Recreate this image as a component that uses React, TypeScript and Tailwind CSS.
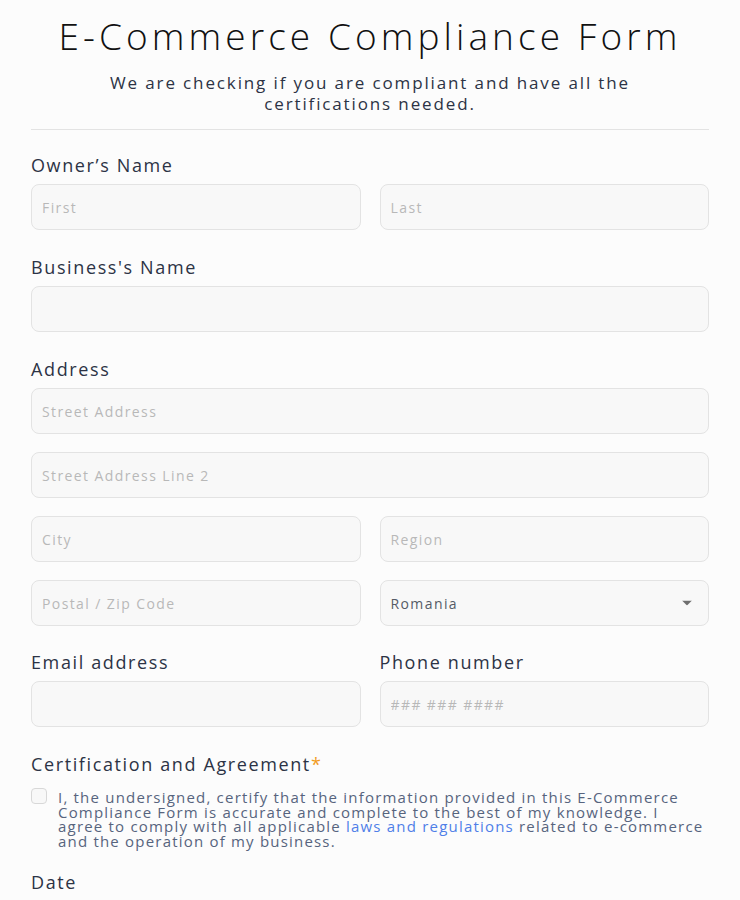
import React from 'react';

const font = { fontFamily: '"Open Sans", "DejaVu Sans", sans-serif' };

const fieldCls =
  'h-[46px] px-[10px] bg-[#f8f8f8] border border-[#e3e3e3] rounded-[8px] text-[14px] tracking-[0.1em] text-[#2c3345] placeholder:text-[#b8b8b8] outline-none';
const inputCls = 'w-full ' + fieldCls;

function Label({ children }: { children: React.ReactNode }) {
  return (
    <label className="block h-[22px] leading-[22px] text-[18px] font-medium tracking-[0.09em] text-[#2c3345] mb-[8px]">
      {children}
    </label>
  );
}

export default function App() {
  return (
    <div className="min-h-screen bg-[#fcfcfc]" style={font}>
      <div className="px-[31px] pt-[14px]">
        <h1 className="text-center text-[37px] font-light leading-[44px] tracking-[0.11em] text-[#111]">
          E-Commerce Compliance Form
        </h1>
        <p className="mt-[14px] text-center text-[17px] leading-[21px] tracking-[0.11em] text-[#2c3345]">
          We are checking if you are compliant and have all the
          <br />
          certifications needed.
        </p>
        <div className="mt-[15px] border-t border-[#e3e3e3]" />

        <div className="mt-[24px]">
          <Label>Owner’s Name</Label>
          <div className="grid grid-cols-2 gap-[19px]">
            <input className={inputCls} placeholder="First" />
            <input className={inputCls} placeholder="Last" />
          </div>
        </div>

        <div className="mt-[26px]">
          <Label>Business's Name</Label>
          <input className={inputCls} />
        </div>

        <div className="mt-[26px]">
          <Label>Address</Label>
          <div className="flex flex-col gap-[18px]">
            <input className={inputCls} placeholder="Street Address" />
            <input className={inputCls} placeholder="Street Address Line 2" />
            <div className="grid grid-cols-2 gap-[19px]">
              <input className={inputCls} placeholder="City" />
              <input className={inputCls} placeholder="Region" />
            </div>
            <div className="grid grid-cols-2 gap-[19px]">
              <input className={inputCls} placeholder="Postal / Zip Code" />
              <div className="relative">
                <select className={inputCls + ' appearance-none !text-[#555b66]'} defaultValue="Romania">
                  <option>Romania</option>
                </select>
                <svg
                  className="absolute right-[17px] top-1/2 -translate-y-1/2 pointer-events-none"
                  width="10"
                  height="5"
                  viewBox="0 0 10 5"
                >
                  <path d="M0 0h10L5 5z" fill="#6f6f6f" />
                </svg>
              </div>
            </div>
          </div>
        </div>

        <div className="mt-[25px] grid grid-cols-2 gap-[19px]">
          <div>
            <Label>Email address</Label>
            <input className={inputCls} />
          </div>
          <div>
            <Label>Phone number</Label>
            <input className={inputCls} placeholder="### ### ####" />
          </div>
        </div>

        <div className="mt-[26px]">
          <Label>
            Certification and Agreement<span className="text-[#f29c1f]">*</span>
          </Label>
          <div className="flex gap-[11px] pt-[7px]">
            <span className="-mt-[2px] w-[16px] h-[16px] shrink-0 rounded-[4px] border border-[#d8d8d8] bg-[#f8f8f8]" />
            <p className="text-[15px] leading-[14.5px] tracking-[0.08em] whitespace-nowrap text-[#57647e]">
              I, the undersigned, certify that the information provided in this E-Commerce
              <br />
              Compliance Form is accurate and complete to the best of my knowledge. I
              <br />
              agree to comply with all applicable <span className="text-[#4f7fe8]">laws and regulations</span> related to
              e-commerce
              <br />
              and the operation of my business.
            </p>
          </div>
        </div>

        <div className="mt-[23px]">
          <Label>Date</Label>
          <input className={fieldCls + ' w-[290px]'} />
        </div>
      </div>
    </div>
  );
}
